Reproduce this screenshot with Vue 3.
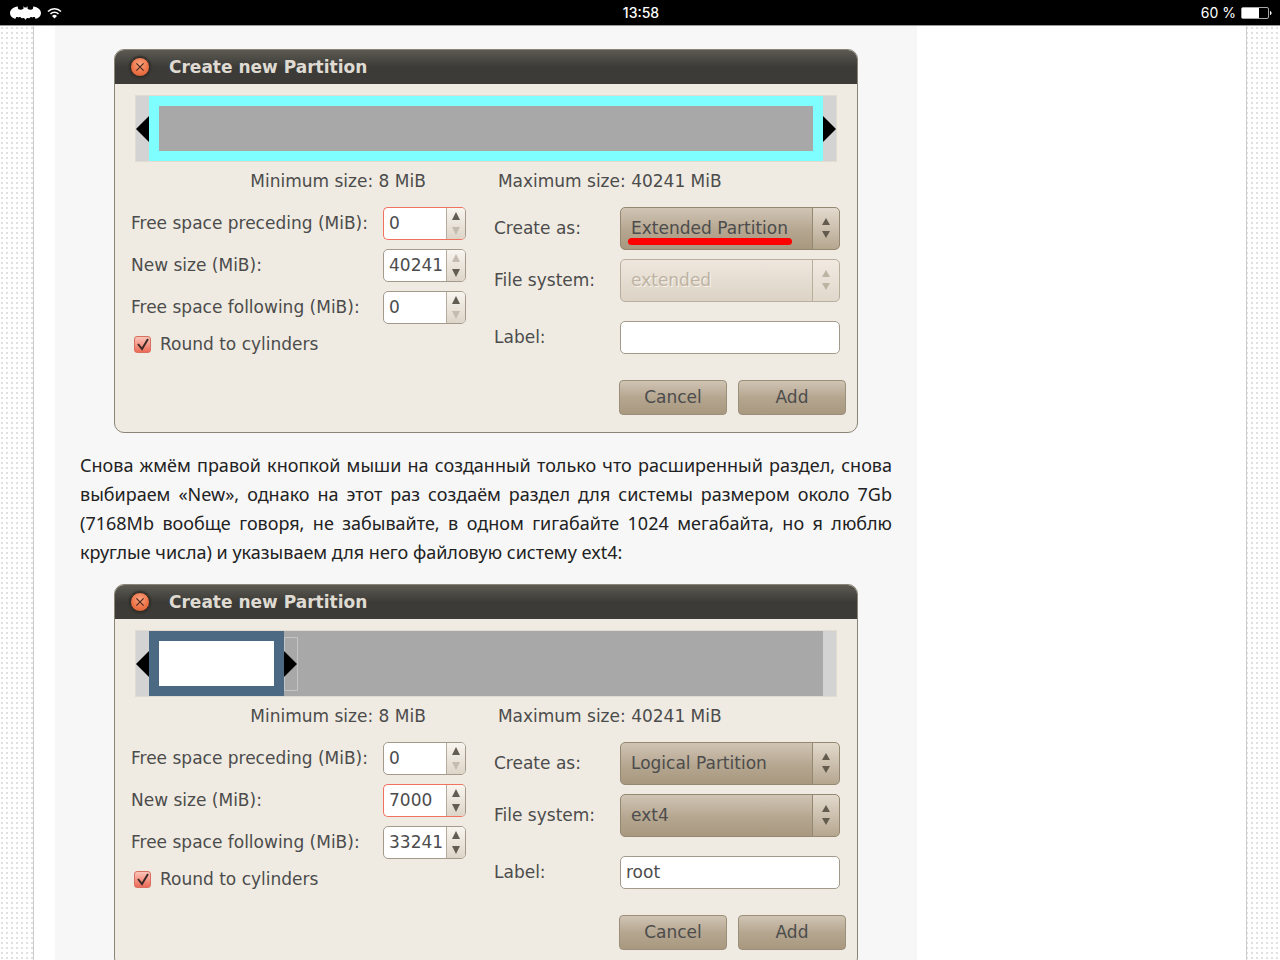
<template>
    <div class="screen">
        <header class="status">
            <div class="status_left">
                <svg class="icon_bat" viewBox="0 0 62 28" aria-hidden="true">
                    <path d="M16 1C6 2 0 8 0 14s4 10 11 12c0-4 3-5 6-3 2-2 5-1 7 2 3-2 5-1 7 3 2-4 4-5 7-3 2-3 5-4 7-2 3-2 6-1 6 3 7-2 11-6 11-12S56 2 46 1c1 3 0 6-3 6-4 1-7 0-8-2V0l-2 3h-4l-2-3v5c-1 2-4 3-8 2-3 0-4-3-3-6z" />
                </svg>
                <svg class="icon_wifi" viewBox="0 0 30 22" aria-hidden="true">
                    <path d="M2 8a18 18 0 0 1 26 0M7 13a11 11 0 0 1 16 0" />
                    <path class="fill" d="M15 22l-5-5a7 7 0 0 1 10 0z" />
                </svg>
            </div>
            <time class="clock">13:58</time>
            <div class="status_right">
                <span>60 %</span>
                <svg class="icon_battery" viewBox="0 0 31 12" aria-hidden="true">
                    <rect class="case" x="0.5" y="0.5" width="27" height="11" rx="1.5" />
                    <rect class="charge" x="1" y="1" width="17" height="10" />
                    <path class="charge" d="M29 4c2 0 2 4 0 4z" />
                </svg>
            </div>
        </header>

        <div class="backdrop">
            <div class="page">
                <main class="article">
                    <template v-for="(dialog, idx) in dialogs" :key="idx">
                        <section class="dialog">
                            <div class="titlebar">
                                <button class="btn_close" type="button" aria-label="Close">
                                    <svg viewBox="0 0 10 10"><path d="M2 2l6 6M8 2l-6 6" /></svg>
                                </button>
                                <h2>Create new Partition</h2>
                            </div>

                            <div class="meter">
                                <span class="edge"><i class="tri left"></i></span>
                                <div class="track">
                                    <div class="part" :class="dialog.kind" :style="{width: dialog.used + '%'}"></div>
                                    <span v-if="dialog.used < 100" class="handle"><i class="tri right"></i></span>
                                </div>
                                <span class="edge"><i v-if="dialog.used == 100" class="tri right"></i></span>
                            </div>

                            <div class="limits">
                                <span>Minimum size: 8 MiB</span>
                                <span>Maximum size: 40241 MiB</span>
                            </div>

                            <form class="form" @submit.prevent>
                                <div class="col_size">
                                    <div v-for="spin in dialog.spins" :key="spin.id" class="row">
                                        <label :for="spin.id + idx">{{spin.label}}</label>
                                        <div class="spin" :class="{'focus':spin.focus}">
                                            <input :id="spin.id + idx" v-model="spin.value" type="text" inputmode="numeric">
                                            <div class="steps">
                                                <button type="button" aria-label="Increase" :disabled="!spin.up" @click="step(spin, 1)">
                                                    <svg viewBox="0 0 8 8"><path d="M4 0l4 8H0z" /></svg>
                                                </button>
                                                <button type="button" aria-label="Decrease" :disabled="!spin.down" @click="step(spin, -1)">
                                                    <svg viewBox="0 0 8 8"><path d="M0 0h8L4 8z" /></svg>
                                                </button>
                                            </div>
                                        </div>
                                    </div>
                                    <label class="check">
                                        <input v-model="dialog.round" type="checkbox">
                                        <svg v-if="dialog.round" viewBox="0 0 16 16" aria-hidden="true"><path d="M3 8l4 5 6-10" /></svg>
                                        <span>Round to cylinders</span>
                                    </label>
                                </div>

                                <div class="col_type">
                                    <div v-for="combo in dialog.combos" :key="combo.id" class="row">
                                        <label :for="combo.id + idx">{{combo.label}}</label>
                                        <div class="combo" :class="{'off':combo.disabled}">
                                            <select :id="combo.id + idx" v-model="combo.value" :disabled="combo.disabled">
                                                <option v-for="opt in combo.options" :key="opt">{{opt}}</option>
                                            </select>
                                            <svg class="arrows" viewBox="0 0 8 22" aria-hidden="true"><path d="M4 1l4 7H0zM0 14h8l-4 7z" /></svg>
                                            <span v-if="combo.marked" class="mark"></span>
                                        </div>
                                    </div>
                                    <div class="row name">
                                        <label :for="'name' + idx">Label:</label>
                                        <input :id="'name' + idx" v-model="dialog.name" class="text" type="text">
                                    </div>
                                </div>
                            </form>

                            <div class="actions">
                                <button type="button">Cancel</button>
                                <button type="button">Add</button>
                            </div>
                        </section>

                        <p v-if="dialog.text">{{dialog.text}}</p>
                    </template>
                </main>
            </div>
        </div>
    </div>
</template>

<script setup>
    import { reactive } from 'vue';

    const types = ['Primary Partition', 'Logical Partition', 'Extended Partition'];

    const dialogs = reactive([
        {
            kind: 'extended',
            used: 100,
            spins: [
                { id: 'before', label: 'Free space preceding (MiB):', value: '0', up: true, down: false, focus: true },
                { id: 'size', label: 'New size (MiB):', value: '40241', up: false, down: true },
                { id: 'after', label: 'Free space following (MiB):', value: '0', up: true, down: false },
            ],
            round: true,
            combos: [
                { id: 'type', label: 'Create as:', value: 'Extended Partition', options: types, marked: true },
                { id: 'fs', label: 'File system:', value: 'extended', options: ['extended'], disabled: true },
            ],
            name: '',
            text: 'Снова жмём правой кнопкой мыши на созданный только что расширенный раздел, снова выбираем «New», однако на этот раз создаём раздел для системы размером около 7Gb (7168Mb вообще говоря, не забывайте, в одном гигабайте 1024 мегабайта, но я люблю круглые числа) и указываем для него файловую систему ext4:',
        },
        {
            kind: 'logical',
            used: 20,
            spins: [
                { id: 'before', label: 'Free space preceding (MiB):', value: '0', up: true, down: false },
                { id: 'size', label: 'New size (MiB):', value: '7000', up: true, down: true, focus: true },
                { id: 'after', label: 'Free space following (MiB):', value: '33241', up: true, down: true },
            ],
            round: true,
            combos: [
                { id: 'type', label: 'Create as:', value: 'Logical Partition', options: types },
                { id: 'fs', label: 'File system:', value: 'ext4', options: ['ext2', 'ext3', 'ext4'] },
            ],
            name: 'root',
        },
    ]);

    const step = (spin, diff) => {
        spin.value = String(Math.max(0, Number(spin.value) + diff));
    }
</script>

<style>
body {background:#fff;}
</style>
<style scoped>
* {box-sizing:border-box;}
.screen {display:flex; flex-direction:column; height:100vh; overflow:hidden;}

/* status bar */
.status {display:flex; flex:none; align-items:center; height:26px; padding:0 8px 0 10px; border-bottom:1px solid #999; background:#000; color:#fff; font:14px/24px "Inter", "Liberation Sans", sans-serif;}
.status_left, .status_right {display:flex; flex:1; align-items:center; gap:6px;}
.status_right {justify-content:flex-end; gap:5px;}
.clock {font-weight:500;}
.icon_bat {width:31px; height:14px; fill:#fff;}
.icon_wifi {width:15px; height:12px; fill:none; stroke:#fff; stroke-width:3;}
.icon_wifi .fill {fill:#fff; stroke:none;}
.icon_battery {width:31px; height:12px;}
.icon_battery .case {fill:none; stroke:#aaa;}
.icon_battery .charge {fill:#fff;}

/* page */
.backdrop {flex:1; min-height:0; padding:0 33px; background:#fff radial-gradient(circle at 2px 2px, #e0e0e0 1px, transparent 1px) 0 0 / 5px 5px;}
.page {display:flex; min-height:100%; padding:0 329px 0 21px; border:solid #ccc; border-width:0 1px; background:#fff;}
.article {flex:1; min-width:0; padding:23px 25px 0; background:#f7f7f7;}
.article p {margin:18px 0 17px; color:#222; font:18px/29px "Noto Sans", sans-serif; text-align:justify;}

/* dialog */
.dialog {margin:0 34px; border:1px solid #8b8577; border-radius:10px; background:#efebe2; color:#4c4c4c; font:17px/24px "DejaVu Sans", sans-serif; overflow:hidden;}
.titlebar {display:flex; align-items:center; gap:19px; height:34px; padding:0 15px; background:linear-gradient(#5c5a52, #3c3b37 50%, #3c3b37);}
.titlebar h2 {margin:0; color:#dfdbd2; font-size:17px; font-weight:bold;}
.btn_close {display:flex; align-items:center; justify-content:center; width:20px; height:20px; padding:0; border:1px solid #2f2c28; border-radius:50%; background:radial-gradient(circle at 50% 35%, #f9a583, #ee7448 55%, #d2582e); box-shadow:0 0 2px 1px #2f2c28;}
.btn_close svg {width:12px; height:12px; fill:none; stroke:#4a2a1e; stroke-width:1;}

.meter {display:flex; height:67px; margin:11px 20px 0; border:1px solid #e2dcd0; background:#d3d3d3;}
.edge {display:flex; flex:none; align-items:center; width:13px;}
.track {display:flex; flex:1; align-items:center; background:#a8a8a8;}
.part {height:100%; border:10px solid #7ffeff; background:#a8a8a8;}
.part.logical {border-color:#4b6983; background:#fff;}
.handle {display:flex; align-items:center; width:14px; height:54px; border:1px solid #c4c4c4;}
.handle .tri {margin-left:-1px;}
.tri {border:solid transparent; border-width:13px 0;}
.tri.left {border-right:13px solid #000;}
.tri.right {border-left:13px solid #000;}

.limits {display:flex; justify-content:center; gap:72px; margin:7px 0 14px;}
.form {display:flex; gap:28px; padding:0 17px 0 16px;}
.form input, .form select {min-width:0; margin:0; color:#4c4c4c; font:inherit; outline:0;}
.col_size {display:flex; flex-direction:column; gap:9px; width:335px;}
.col_type {display:flex; flex:1; flex-direction:column; gap:9px;}
.row {display:flex; align-items:center; justify-content:space-between;}
.row > label {padding-bottom:2px;}

.spin {display:flex; width:83px; height:33px; border:1px solid #a39a8c; border-radius:5px; background:#fff; overflow:hidden;}
.spin input {flex:1; padding:0 0 2px 5px; border:0; background:none;}
.spin.focus {border-color:#f0715f #a39a8c #f0715f #f0715f;}
.steps {display:flex; flex-direction:column; width:19px; border-left:1px solid #b5ac9d; background:linear-gradient(#f8f5ef, #ddd5c8);}
.steps button {display:flex; flex:1; align-items:center; justify-content:center; padding:0; border:0; background:none;}
.steps svg {width:8px; height:8px; fill:#625c52;}
.steps button:disabled svg {fill:#c4bcae;}

.check {display:flex; align-items:center; position:relative; gap:9px; margin-top:-1px; padding-left:3px;}
.check input {width:17px; height:17px; border:1px solid #d9705f; border-radius:3px; background:linear-gradient(#fbc4b8, #ee6a58); appearance:none;}
.check svg {width:16px; height:16px; fill:none; stroke:#3a2a26; stroke-width:2; position:absolute; left:4px; pointer-events:none;}

.combo {position:relative; width:220px; height:43px;}
.combo select {width:100%; height:100%; padding:0 30px 2px 10px; border:1px solid #948872; border-radius:5px; background:linear-gradient(#e3dacd, #b5a68f) right / 26px 100% no-repeat, linear-gradient(90deg, #948872, #948872) right 26px top / 1px 100% no-repeat, linear-gradient(#d0c4b4, #b5a690 55%, #a8987f); appearance:none;}
.combo .arrows {width:8px; height:22px; fill:#635b4d; position:absolute; top:10px; right:10px; pointer-events:none;}
.combo.off select {border-color:#b9ae9e; background:linear-gradient(#f1eae1, #e1d8cc) right / 26px 100% no-repeat, linear-gradient(90deg, #b9ae9e, #b9ae9e) right 26px top / 1px 100% no-repeat, linear-gradient(#efe7de, #dcd2c5); color:#bdb3a3; text-shadow:1px 1px #f8f3ec; opacity:1;}
.combo.off .arrows {fill:#bdb3a3;}
.mark {height:7px; border-radius:4px; background:#f00; position:absolute; right:48px; bottom:5px; left:8px;}
.row.name {margin-top:10px;}
.text {width:220px; height:33px; padding:0 5px 2px; border:1px solid #a39a8c; border-radius:5px; background:#fff;}

.actions {display:flex; justify-content:flex-end; gap:11px; padding:24px 11px 17px;}
.actions button {width:108px; height:35px; padding:0 0 2px; border:1px solid #9c8f7a; border-radius:4px; background:linear-gradient(#d0c4b4, #b5a690 50%, #a8987f); color:#4c4c4c; font:inherit;}
</style>
